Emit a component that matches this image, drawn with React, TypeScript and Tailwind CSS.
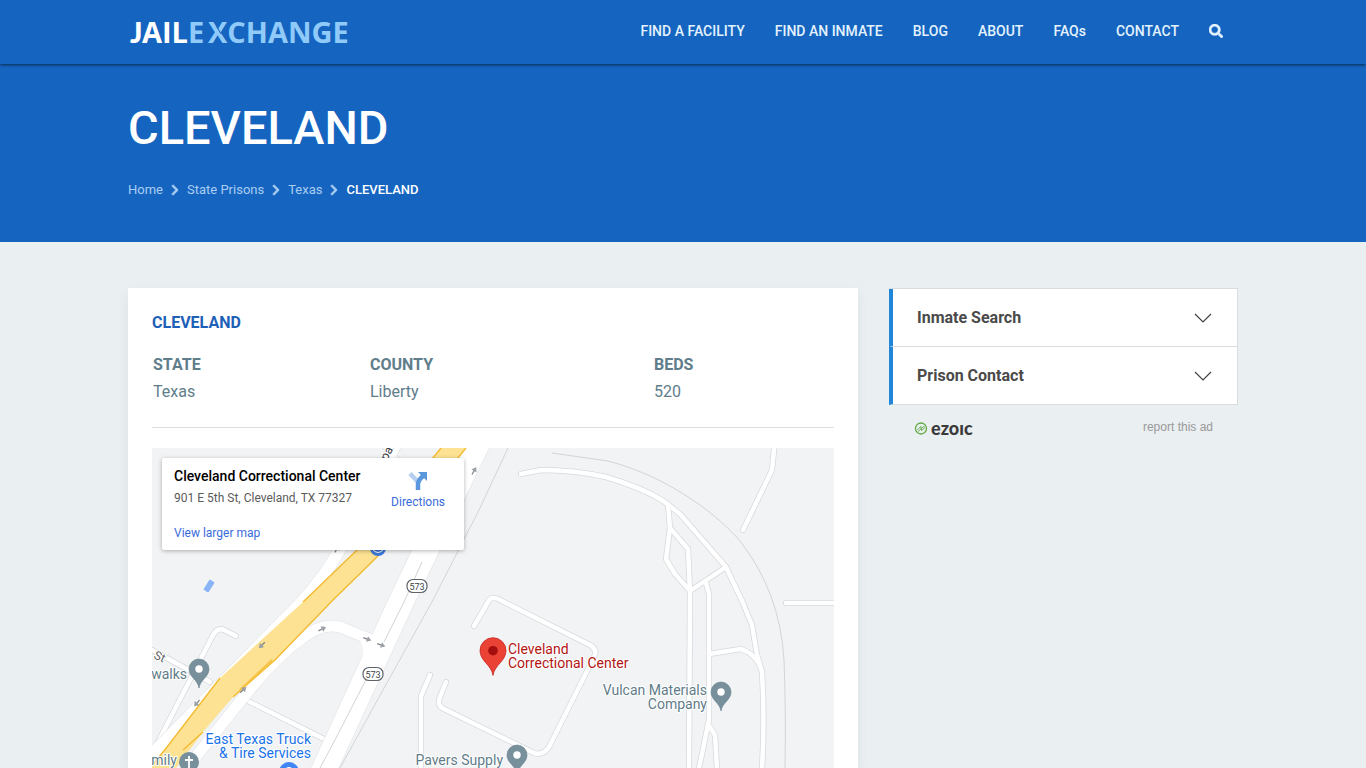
import React from "react";
import { FaSearch, FaChevronRight } from "react-icons/fa";

const navItems = ["FIND A FACILITY", "FIND AN INMATE", "BLOG", "ABOUT", "FAQs", "CONTACT"];
const crumbs = ["Home", "State Prisons", "Texas"];
const panels = ["Inmate Search", "Prison Contact"];

const localRoads = [
  "M521 474 L541 470 Q575 470 606 477 Q640 487 662 500 L680 514 L726 567 L743 603 L752 625 L757 655 L762 672 Q765 720 762 768",
  "M668 504 L670 528 L666 559 L675 574 L690 591 L689 768",
  "M670 528 L688 549 L690 591 L726 567",
  "M706 583 L709 594 L709 720 L699 768",
  "M708 724 L715 735 L717 768",
  "M709 654 L741 649 Q754 653 760 666",
  "M775 440 L772 470 L743 530",
  "M786 603 H850",
  "M474 626 L488 602 Q490 596 498 599 L590 645 Q598 650 594 657 L549 747 Q543 756 534 753 L442 708 Q437 704 440 697 L446 682",
  "M430 675 L421 696 V768",
  "M236 636 L224 630 Q218 627 213 635 L155 748",
  "M152 650 L196 674 L210 682",
  "M240 697 L330 742",
  "M378 440 L398 460",
];

const arrows = [
  { x: 474, y: 471, r: -60 },
  { x: 337, y: 549, r: -55 },
  { x: 322, y: 629, r: -28 },
  { x: 367, y: 639, r: 20 },
  { x: 381, y: 645, r: 20 },
  { x: 262, y: 645, r: 136 },
  { x: 243, y: 690, r: -42 },
  { x: 197, y: 703, r: 130 },
];

const highway = "M479 440 L402 600 L317 785";
const serviceRoad = "M150 756 L300 604 Q330 570 342 545 L398 440";
const ramp = "M190 764 L247 693 Q275 658 300 640 Q321 622 340 627 L372 640 L376 660";

function Logo() {
  return (
    <svg viewBox="0 0 224 44" className="h-11 w-56" role="img" aria-label="Jail Exchange">
      <g fontFamily="'Open Sans', sans-serif" fontWeight="700" fontSize="29">
        <text x="2" y="34" fill="#fff" fontFamily="Lato, sans-serif" fontWeight="900">J</text>
        <text x="14" y="34" fill="#fff">AIL</text>
        <text x="60" y="34" fill="#90caf9">E</text>
        <text x="80" y="34" fill="#90caf9">XCHANGE</text>
      </g>
      <path d="M89 18 L93 25" stroke="#1565c0" strokeWidth="1" />
    </svg>
  );
}

function Pin({ x, y, red = false }: { x: number; y: number; red?: boolean }) {
  return (
    <g transform={`translate(${x} ${y}) scale(${red ? 1.3 : 1})`}>
      <path
        d="M0 18 C-1 10 -10 7 -10 -1 A10 10 0 0 1 10 -1 C10 7 1 10 0 18Z"
        fill={red ? "#ea4335" : "#78909c"}
        stroke={red ? "#c5221f" : "#607d8b"}
        strokeWidth="0.6"
      />
      <circle cy="-1" r="3.7" fill={red ? "#a50e0e" : "#fff"} />
    </g>
  );
}

function Shield({ x, y }: { x: number; y: number }) {
  return (
    <g>
      <rect x={x - 10} y={y - 6.5} width="20" height="13" rx="6" fill="#fff" stroke="#5f6368" strokeWidth="1.2" />
      <text x={x} y={y + 3.5} fontSize="9" textAnchor="middle" fill="#3c4043">573</text>
    </g>
  );
}

function MapDrawing() {
  return (
    <svg
      viewBox="152 448 682 320"
      preserveAspectRatio="xMinYMin slice"
      className="absolute inset-0 h-full w-full"
      fontFamily="Roboto, sans-serif"
      role="img"
      aria-label="Map of Cleveland Correctional Center"
    >
      <rect x="152" y="448" width="900" height="600" fill="#f1f3f4" />
      <g fill="none" stroke="#d2d4d6" strokeWidth="1">
        <path d="M552 453 L608 461 C670 477 720 517 740 541 Q780 592 784 660 Q786 710 785 768" />
        <path d="M508 448 L480 508 L433 600 L383 690 L340 768" />
      </g>
      <g fill="none" strokeLinecap="round" strokeLinejoin="round">
        {localRoads.map((d) => <path key={d} d={d} stroke="#d6d9dc" strokeWidth="6" />)}
        {localRoads.map((d) => <path key={d} d={d} stroke="#fff" strokeWidth="4.5" />)}
      </g>
      <g fill="none" strokeLinejoin="round">
        <path d={highway} stroke="#dfe1e5" strokeWidth="26" />
        <path d={serviceRoad} stroke="#dfe1e5" strokeWidth="13" />
        <path d={ramp} stroke="#dfe1e5" strokeWidth="12" />
        <path d="M355 634 Q366 644 362 660 L380 640Z" fill="#fff" />
        <path d={highway} stroke="#fff" strokeWidth="25" />
        <path d={serviceRoad} stroke="#fff" strokeWidth="12" />
        <path d={ramp} stroke="#fff" strokeWidth="11" />
        <path d="M422 562 L404 602 L384 642 M371 670 L336 738 L320 768" stroke="#d0d3d7" strokeWidth="1" />
      </g>
      <path d="M441 448 L357 550 L303 602 L220 678 L167 747 L150 768 H176 L203 732 L233 697 L275 660 L333 600 L378 556 L466 448Z" fill="#fde293" />
      <path
        d="M441 448 L357 550 L303 602 M220 678 L167 747 L150 768 M466 448 L378 556 L333 600 L275 660 L233 697 M203 732 L183 750"
        fill="none"
        stroke="#f2b92c"
        strokeWidth="1.3"
      />
      <path d="M240 690 L272 660" stroke="#f7c244" strokeWidth="2" />

      <g stroke="#80868b" strokeWidth="1.3" fill="none">
        {arrows.map((a) => (
          <g key={`${a.x}-${a.y}`} transform={`translate(${a.x} ${a.y}) rotate(${a.r})`}>
            <path d="M-4 0H1" />
            <path d="M0 -3 L4.5 0 L0 3Z" fill="#9aa0a6" stroke="none" />
          </g>
        ))}
      </g>
      <rect x="-3" y="-6" width="6" height="12" rx="1" fill="#8ab4f8" transform="translate(209 586) rotate(32)" />
      <circle cx="378" cy="548" r="8" fill="#3c78d8" />
      <path d="M372 549 Q378 556 384 549" fill="none" stroke="#fff" strokeWidth="1" />
      <Shield x={417} y={586} />
      <Shield x={373} y={674} />

      <Pin x={493} y={652} red />
      <Pin x={199} y={670} />
      <Pin x={721} y={693} />
      <Pin x={517} y={756} />
      <circle cx="189" cy="762" r="10" fill="#78909c" />
      <path d="M189 756 V768 M185 760 H193" stroke="#fff" strokeWidth="1.8" />
      <circle cx="289" cy="772" r="10" fill="#4285f4" />
      <path d="M286 771 A3 3 0 0 1 292 771" fill="none" stroke="#fff" strokeWidth="1.8" />

      <g fontSize="14" stroke="#fff" strokeWidth="2" strokeLinejoin="round" style={{ paintOrder: "stroke" }}>
        <text x="508" y="654" fill="#b31412">Cleveland</text>
        <text x="508" y="668" fill="#b31412">Correctional Center</text>
        <text x="707" y="695" textAnchor="end" fill="#5f7c88">Vulcan Materials</text>
        <text x="707" y="709" textAnchor="end" fill="#5f7c88">Company</text>
        <text x="503" y="765" textAnchor="end" fill="#5f7c88">Pavers Supply</text>
        <text x="311" y="744" textAnchor="end" fill="#1a73e8">East Texas Truck</text>
        <text x="311" y="758" textAnchor="end" fill="#1a73e8">&amp; Tire Services</text>
        <text x="187" y="679" textAnchor="end" fill="#5f7c88">walks</text>
        <text x="177" y="765" textAnchor="end" fill="#5f7c88">mily</text>
        <text transform="translate(153 658) rotate(25)" fontSize="12" fill="#5f6368">St</text>
        <text transform="translate(387 461) rotate(-62)" fontSize="12" fill="#3c4043">pa.</text>
      </g>
    </svg>
  );
}

function MapCard() {
  return (
    <div className="absolute left-2.5 top-2.5 flex h-[92px] w-[302px] justify-between rounded-xs bg-white pl-3 pr-[19px] shadow-[0_1px_4px_rgba(0,0,0,0.3)]">
      <div className="flex flex-col pt-2.5">
        <h3 className="text-sm leading-4 font-medium text-black">Cleveland Correctional Center</h3>
        <p className="mt-1.5 text-xs leading-4 text-[#5b5b5b]">901 E 5th St, Cleveland, TX 77327</p>
        <a href="#map" className="mt-[19px] text-xs leading-4 text-[#3a6bdb]">View larger map</a>
      </div>
      <a href="#directions" className="flex flex-col items-center pt-3 text-xs leading-4 text-[#3a6bdb]">
        <svg viewBox="0 0 20 20" className="mb-1 h-5 w-5" aria-hidden="true">
          <path d="M2 3.5 L10 12" stroke="#b5cfef" strokeWidth="4.5" />
          <path d="M10 20 V14 Q10 10.5 15 6" fill="none" stroke="#5b97dd" strokeWidth="4.5" />
          <path d="M10 2 H19 V11Z" fill="#5b97dd" />
        </svg>
        Directions
      </a>
    </div>
  );
}

export default function App() {
  return (
    <div className="flex min-h-screen flex-col bg-[#eaeff2] font-[Roboto,sans-serif]">
      <header className="relative bg-[#1565c0] shadow-[0_1px_3px_rgba(0,0,0,0.6)]">
        <div className="mx-auto flex h-16 max-w-[1110px] items-center justify-between pb-0.5">
          <a href="#home"><Logo /></a>
          <nav className="flex items-center gap-[30px] pr-[15px] text-sm font-medium text-[#e3f2fd]">
            {navItems.map((item) => <a key={item} href={`#${item.toLowerCase().replaceAll(" ", "-")}`}>{item}</a>)}
            <button type="button" aria-label="Search"><FaSearch className="h-3.5 w-3.5" stroke="currentColor" strokeWidth="20" /></button>
          </nav>
        </div>
      </header>

      <section className="bg-[#1565c0]">
        <div className="mx-auto flex h-[178px] max-w-[1110px] flex-col pt-[33px]">
          <h1 className="text-[47px] leading-[62px] font-medium text-white">CLEVELAND</h1>
          <nav aria-label="Breadcrumb" className="mt-[21px] flex items-center text-[13px] leading-5 text-[#a9cdf2]">
            {crumbs.map((c) => (
              <React.Fragment key={c}>
                <a href={`#${c.toLowerCase().replace(" ", "-")}`}>{c}</a>
                <FaChevronRight className="mx-[6px] h-3 w-3" stroke="currentColor" strokeWidth="30" />
              </React.Fragment>
            ))}
            <span className="font-medium text-white">CLEVELAND</span>
          </nav>
        </div>
      </section>

      <main className="mx-auto flex w-full max-w-[1110px] flex-1 gap-[31px] pt-[46px]">
        <article className="flex min-w-0 flex-1 flex-col bg-white px-6 pt-[25px] shadow-[0_4px_12px_rgba(0,0,0,0.06)]">
          <h2 className="text-base leading-5 font-bold text-[#1e5fb8]">CLEVELAND</h2>
          <table className="mt-[18px] w-full table-fixed text-left text-base leading-[27px] text-[#607d8b]">
            <colgroup>
              <col className="w-[217px]" />
              <col className="w-[284px]" />
              <col />
            </colgroup>
            <thead>
              <tr>
                <th className="px-px font-bold">STATE</th>
                <th className="px-px font-bold">COUNTY</th>
                <th className="px-px font-bold">BEDS</th>
              </tr>
            </thead>
            <tbody>
              <tr>
                <td className="px-px">Texas</td>
                <td className="px-px">Liberty</td>
                <td className="px-px">520</td>
              </tr>
            </tbody>
          </table>
          <hr className="mt-[22px] mb-5 border-[#dadfe2]" />
          <div className="relative min-h-80 flex-1 overflow-hidden">
            <MapDrawing />
            <MapCard />
          </div>
        </article>

        <aside className="w-[349px]">
          <div className="border-t border-r border-[#d9dde0]">
            {panels.map((p) => (
              <button
                key={p}
                type="button"
                className="flex h-[58px] w-full items-center justify-between border-b border-l-4 border-b-[#d9dde0] border-l-[#2186d8] bg-white pr-[25px] pl-6 text-base font-bold text-[#4a4a4a]"
              >
                {p}
                <svg viewBox="0 0 18 10" className="h-2.5 w-[18px]" fill="none" stroke="#424242" strokeWidth="1.2" aria-hidden="true">
                  <path d="M1 1 L9 9 L17 1" />
                </svg>
              </button>
            ))}
          </div>
          <div className="flex items-start justify-between pt-3.5 pr-[25px] pl-[25px]">
            <a href="#ezoic" aria-label="ezoic" className="flex items-center gap-[3px] font-[Lato,sans-serif] text-lg leading-[18px] font-black text-[#3b3b3b]">
              <svg viewBox="0 0 14 14" className="h-3.5 w-3.5" fill="none" stroke="#5fa844" aria-hidden="true">
                <circle cx="7" cy="7.5" r="5.5" strokeWidth="1.3" />
                <path d="M3.5 8.5 L7 5.5 V7.5 L10.5 5 M4 10.5 L7.5 7.5 V9.5 L11 6.5" strokeWidth="0.9" />
              </svg>
              ezoıc
            </a>
            <a href="#report" className="font-['Liberation_Sans',Arial,sans-serif] text-xs leading-4 text-[#999]">report this ad</a>
          </div>
        </aside>
      </main>
    </div>
  );
}
